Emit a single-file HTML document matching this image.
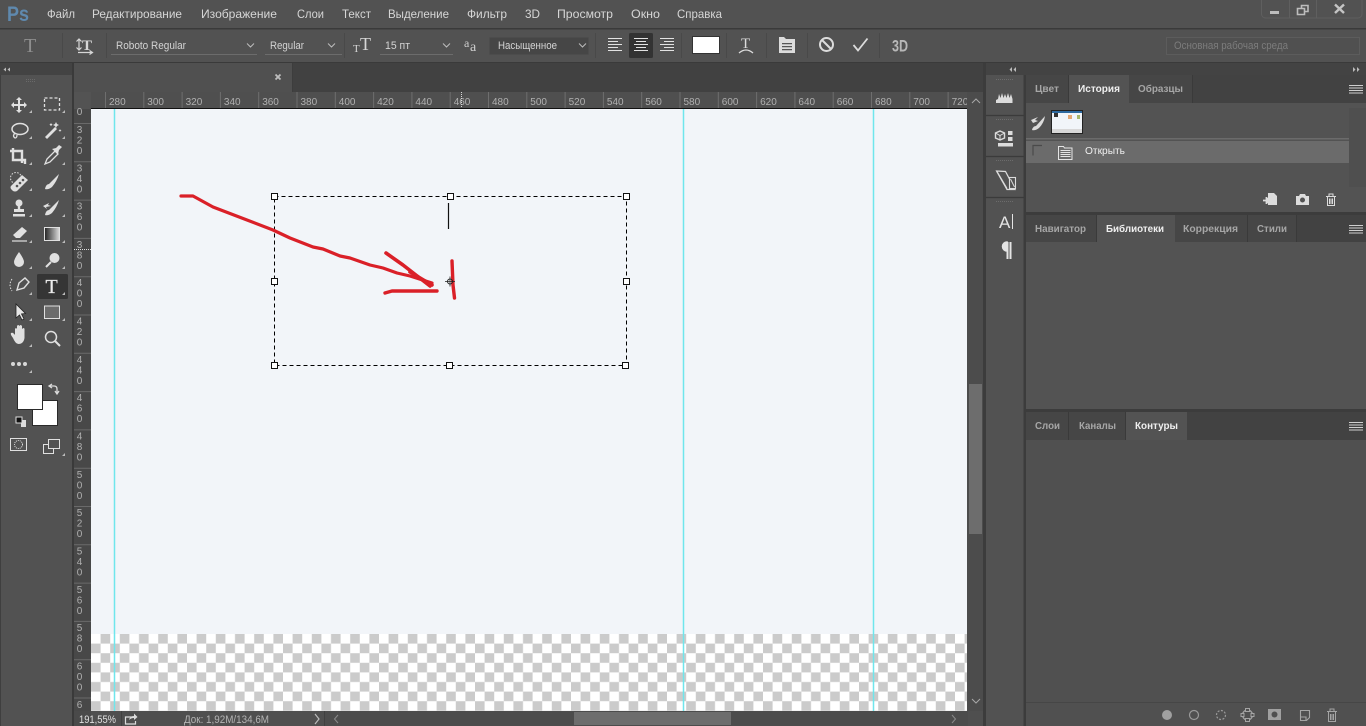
<!DOCTYPE html>
<html><head><meta charset="utf-8"><style>
html,body{margin:0;padding:0;background:#525252;overflow:hidden}
svg{display:block;font-family:"Liberation Sans",sans-serif;filter:blur(.25px)}
.m{font-size:12px;fill:#d6d6d6}
.o{font-size:11px;fill:#d4d4d4}
.r{font-size:10px;fill:#b0b0b0}
.t{font-size:10.5px;fill:#a6a6a6;font-weight:bold}
.a{font-size:10.5px;fill:#efefef;font-weight:bold}
</style></head><body>
<svg width="1366" height="726" viewBox="0 0 1366 726" xmlns="http://www.w3.org/2000/svg">
<defs>
<pattern id="ch" x="91" y="634" width="19.2" height="19.2" patternUnits="userSpaceOnUse">
<rect width="19.2" height="19.2" fill="#fff"/><rect x="9.6" width="9.6" height="9.6" fill="#cbcbcb"/><rect y="9.6" width="9.6" height="9.6" fill="#cbcbcb"/>
</pattern>
<linearGradient id="gr" x1="0" x2="1"><stop offset="0" stop-color="#222"/><stop offset="1" stop-color="#ddd"/></linearGradient>
</defs>
<rect width="1366" height="726" fill="#525252"/>
<!-- title bar -->
<rect y="28" width="1366" height="1.5" fill="#3a3a3a"/>
<text x="7" y="21" font-size="21" font-weight="bold" fill="#5f89ae" textLength="22" lengthAdjust="spacingAndGlyphs">Ps</text>
<g class="m">
<text x="47" y="18" textLength="28" lengthAdjust="spacingAndGlyphs">Файл</text>
<text x="92" y="18" textLength="90" lengthAdjust="spacingAndGlyphs">Редактирование</text>
<text x="201" y="18" textLength="76" lengthAdjust="spacingAndGlyphs">Изображение</text>
<text x="297" y="18" textLength="27" lengthAdjust="spacingAndGlyphs">Слои</text>
<text x="342" y="18" textLength="29" lengthAdjust="spacingAndGlyphs">Текст</text>
<text x="388" y="18" textLength="61" lengthAdjust="spacingAndGlyphs">Выделение</text>
<text x="467" y="18" textLength="40" lengthAdjust="spacingAndGlyphs">Фильтр</text>
<text x="525" y="18" textLength="15" lengthAdjust="spacingAndGlyphs">3D</text>
<text x="557" y="18" textLength="56" lengthAdjust="spacingAndGlyphs">Просмотр</text>
<text x="631" y="18" textLength="29" lengthAdjust="spacingAndGlyphs">Окно</text>
<text x="677" y="18" textLength="45" lengthAdjust="spacingAndGlyphs">Справка</text>
</g>
<!-- window controls -->
<path d="M1261.5 0V14a4 4 0 0 0 4 4H1358a4 4 0 0 0 4-4V0M1289.5 0V18M1316.5 0V18" fill="none" stroke="#5f5f5f"/>
<rect x="1270" y="11" width="9" height="3" fill="#bdbdbd"/>
<path d="M1297.5 8.5h7v6h-7zM1301.5 8V5.500h6.500v6h-3" fill="none" stroke="#bdbdbd" stroke-width="1.600"/>
<path d="M1335 4.500l9 8.500M1344 4.500l-9 8.500" stroke="#c4c4c4" stroke-width="2.400"/>
<!-- options bar -->
<path d="M62.500 33V58M106.500 33V58M344.500 33V58M595.500 33V58M681.500 33V58M726.500 33V58M766.500 33V58M807.500 33V58M879.500 33V58" stroke="#494949"/>
<text x="24" y="52" font-family="Liberation Serif" font-size="20" fill="#8e8e8e">T</text>
<g fill="none" stroke="#d6d6d6" stroke-width="1.200">
<path d="M79 39v11M76.500 47.500L79 50l2.500-2.500M76.500 41.500L79 39l2.500 2.500"/>
<path d="M78 52.500h14M89.500 50.500l3 2-3 2"/>
</g>
<text x="82" y="50" font-family="Liberation Serif" font-weight="bold" font-size="15" fill="#d6d6d6">T</text>
<g class="o">
<text x="116" y="49" textLength="70" lengthAdjust="spacingAndGlyphs">Roboto Regular</text>
<text x="270" y="49" textLength="34" lengthAdjust="spacingAndGlyphs">Regular</text>
<text x="385" y="49" textLength="25" lengthAdjust="spacingAndGlyphs">15 пт</text>
</g>
<path d="M111 54.500H257M265 54.500H342M380 54.500H453" stroke="#6c6c6c"/>
<path d="M247 43.500l3.500 3.500 3.500-3.500M328 43.500l3.500 3.500 3.500-3.500M443 43.500l3.500 3.500 3.500-3.500" fill="none" stroke="#bcbcbc"/>
<text x="353" y="52" font-family="Liberation Serif" font-size="11" fill="#d6d6d6">T</text>
<text x="360" y="50" font-family="Liberation Serif" font-size="18" fill="#d6d6d6">T</text>
<text x="464" y="47" font-family="Liberation Serif" font-size="12" fill="#cfcfcf">a</text>
<text x="470" y="51" font-family="Liberation Serif" font-size="14" fill="#cfcfcf">a</text>
<rect x="489.500" y="37.500" width="99" height="17" rx="1" fill="#464646" stroke="#4c4c4c"/>
<text x="498" y="49" class="o" textLength="59" lengthAdjust="spacingAndGlyphs">Насыщенное</text>
<path d="M579 43.500l3.500 3.500 3.500-3.500" fill="none" stroke="#bcbcbc"/>
<rect x="629" y="33" width="24" height="25" rx="1.500" fill="#333"/>
<path d="M608 38.500h14M608 41.500h10M608 44.500h14M608 47.500h10M608 50.500h14M634 38.500h14M636 41.500h10M634 44.500h14M636 47.500h10M634 50.500h14M660 38.500h14M664 41.500h10M660 44.500h14M664 47.500h10M660 50.500h14" stroke="#e2e2e2" stroke-width="1.100"/>
<rect x="692.500" y="36.500" width="27" height="17" fill="#fff" stroke="#333"/>
<text x="741" y="48" font-family="Liberation Serif" font-size="15" fill="#dcdcdc">T</text>
<path d="M739 53q7-6 14 0" fill="none" stroke="#dcdcdc" stroke-width="1.300"/>
<path d="M779 37h5l2 2h9v14h-16z" fill="#dcdcdc"/>
<path d="M782 43h10v1.200h-10zM782 46h10v1.200h-10zM782 49h10v1.200h-10z" fill="#555"/>
<circle cx="826.500" cy="44.500" r="6.500" fill="none" stroke="#dcdcdc" stroke-width="2"/>
<path d="M822 40l9 9" stroke="#dcdcdc" stroke-width="2"/>
<path d="M853.500 45l4.500 5.500 9.500-12" fill="none" stroke="#dcdcdc" stroke-width="1.800"/>
<text x="892" y="51.500" font-size="17" font-weight="bold" fill="#b8b8b8" textLength="16" lengthAdjust="spacingAndGlyphs">3D</text>
<!-- workspace -->
<rect x="1166.500" y="37.500" width="193" height="17" fill="#505050" stroke="#5c5c5c"/>
<text x="1174" y="49" font-size="11" fill="#7c7c7c" textLength="114" lengthAdjust="spacingAndGlyphs">Основная рабочая среда</text>
<!-- separators -->
<rect y="62" width="1366" height="1.500" fill="#3a3a3a"/>
<rect x="74" y="63" width="912" height="29" fill="#414141"/>
<rect x="74" y="63" width="218" height="29" fill="#505050"/>
<rect x="292" y="63" width="1" height="29" fill="#3d3d3d"/>
<path d="M275.500 74.500l5 5M280.500 74.500l-5 5" stroke="#bdbdbd" stroke-width="1.800"/>
<!-- left toolbar -->
<rect x="0" y="63" width="72" height="12" fill="#434343"/>
<rect x="72" y="63" width="2" height="663" fill="#3a3a3a"/>
<rect x="0" y="75" width="1" height="651" fill="#3f3f3f"/>
<path d="M6 67.500l-2.500 2 2.500 2zM10 67.500l-2.500 2 2.500 2z" fill="#bbb"/>
<path d="M26 79.500h10M26 81.500h10" stroke="#6a6a6a" stroke-dasharray="1 1"/>
<!-- tools -->
<g>
<path d="M19 98v14M12 105h14" stroke="#e0e0e0" stroke-width="2"/>
<path d="M19 97l-3 3h6zM19 113l-3-3h6zM11 105l3-3v6zM27 105l-3-3v6z" fill="#e0e0e0"/>
<rect x="44.500" y="98" width="15" height="12" fill="none" stroke="#e0e0e0" stroke-width="1.300" stroke-dasharray="3 2"/>
<ellipse cx="20" cy="129" rx="8" ry="5.500" fill="none" stroke="#e0e0e0" stroke-width="1.500"/>
<path d="M15 133q-3 3 0 5q2 0 2-3" fill="none" stroke="#e0e0e0" stroke-width="1.300"/>
<path d="M45 137l10-10 2 2-10 10z" fill="#e0e0e0"/>
<path d="M56 122l1 2 2 1-2 1-1 2-1-2-2-1 2-1zM51 123l.6 1 1 .6-1 .6-.6 1-.6-1-1-.6 1-.6zM60 129l.5 1 1 .5-1 .5-.5 1-.5-1-1-.5 1-.5z" fill="#e0e0e0"/>
<path d="M13 148V160H25V164M10 151H22V163" fill="none" stroke="#e0e0e0" stroke-width="2.400"/>
<path d="M45 164l2-5 8-8 3 3-8 8z" fill="none" stroke="#e0e0e0" stroke-width="1.300"/>
<path d="M52 149l4-1 3-3 3 2-3 3-1 4z" fill="#e0e0e0"/>
<path d="M11 186l11-11 6 5-11 11q-2 1-4 0l-2-2q-1-2 0-3z" fill="#e0e0e0"/>
<circle cx="16" cy="178" r="5.500" fill="none" stroke="#e0e0e0" stroke-dasharray="1.500 1.500"/>
<circle cx="20" cy="183" r="1.300" fill="#555"/><circle cx="17" cy="186" r="1.300" fill="#555"/><circle cx="23" cy="180" r="1.300" fill="#555"/>
<path d="M45 189q1-5 4-5l10-10q-2 7-7 13-4 3-7 2z" fill="#e0e0e0"/>
<path d="M13 214h12v2.500H13zM14 209h10v3H14z" fill="#e0e0e0"/>
<circle cx="19" cy="203" r="3.500" fill="#e0e0e0"/>
<rect x="17.800" y="205" width="2.400" height="5" fill="#e0e0e0"/>
<path d="M45 215q1-5 4-5l10-10q-2 7-7 13-4 3-7 2z" fill="#e0e0e0"/>
<path d="M43 206l6-3-1 2 3 1-5 1 1 2z" fill="#e0e0e0"/>
<path d="M13 235l9-8 5 4-7 7h-4z" fill="#e0e0e0"/>
<path d="M12 241h15" stroke="#e0e0e0" stroke-width="1.200"/>
<rect x="44.500" y="227.500" width="15" height="13" fill="url(#gr)" stroke="#e0e0e0"/>
<path d="M19 252q-5 7-5 10a5 5 0 0 0 10 0q0-3-5-10z" fill="#e0e0e0"/>
<circle cx="54.500" cy="258" r="5" fill="#e0e0e0"/>
<path d="M51 262l-5 5" stroke="#e0e0e0" stroke-width="2"/>
<path d="M17 290l2-7 6-5 4 4-5 6z" fill="none" stroke="#e0e0e0" stroke-width="1.400"/>
<path d="M12 279q-4 6 0 12" fill="none" stroke="#e0e0e0" stroke-dasharray="1.500 1.500"/>
<rect x="37" y="274" width="31" height="25" rx="1.500" fill="#353535"/>
<text x="45.500" y="293" font-family="Liberation Serif" font-size="20" fill="#ececec" stroke="#ececec" stroke-width=".3">T</text>
<path d="M16 304v14l3.500-3 2.500 5 2-1-2.500-5 4-.5z" fill="#e6e6e6" stroke="#222" stroke-width=".8"/>
<rect x="44.500" y="306" width="15" height="12.500" fill="#6c6c6c" stroke="#e0e0e0"/>
<path d="M13 338q-3-4-2-5 2-1 4 2v-6q1-2 2 0v-3q1-2 2.500 0 1-2 2.500 0v3q2-2 2.500 0v9q-1 6-6 6-3 0-5.500-6z" fill="#e0e0e0"/>
<circle cx="51" cy="337" r="5.500" fill="none" stroke="#e0e0e0" stroke-width="1.500"/>
<path d="M55 341l5 5" stroke="#e0e0e0" stroke-width="2"/>
<circle cx="13" cy="364" r="2" fill="#d8d8d8"/><circle cx="19" cy="364" r="2" fill="#d8d8d8"/><circle cx="25" cy="364" r="2" fill="#d8d8d8"/>
<path d="M32 113v-3l-3 3zM65 113v-3l-3 3zM32 139v-3l-3 3zM65 139v-3l-3 3zM32 165v-3l-3 3zM65 165v-3l-3 3zM32 191v-3l-3 3zM65 191v-3l-3 3zM32 217v-3l-3 3zM65 217v-3l-3 3zM32 243v-3l-3 3zM65 243v-3l-3 3zM32 269v-3l-3 3zM65 269v-3l-3 3zM32 295v-3l-3 3zM65 295v-3l-3 3zM32 321v-3l-3 3zM65 321v-3l-3 3zM32 347v-3l-3 3zM32 373v-3l-3 3zM65 456v-3l-3 3z" fill="#bbb"/>
<!-- colors -->
<rect x="32.500" y="400.500" width="25" height="25" fill="#fff" stroke="#2a2a2a"/>
<rect x="17.500" y="384.500" width="25" height="25" fill="#fff" stroke="#2a2a2a"/>
<rect x="21" y="420" width="5" height="7" fill="#ddd"/>
<rect x="16" y="417" width="6" height="6" fill="#111" stroke="#ddd"/>
<path d="M49 386h5q3 0 3 3v5M52 384l-3 2 3 2M55 391l2 3 2-3" fill="none" stroke="#dcdcdc" stroke-width="1.300"/>
<rect x="10.500" y="438.500" width="16" height="12" fill="none" stroke="#e0e0e0"/>
<circle cx="18.500" cy="444.500" r="4" fill="none" stroke="#e0e0e0" stroke-dasharray="1 1"/>
<rect x="43.500" y="444.500" width="10" height="9" fill="#525252" stroke="#e0e0e0"/>
<rect x="48.500" y="439.500" width="11" height="9" fill="#525252" stroke="#e0e0e0"/>
</g>
<!-- ruler -->
<rect x="74" y="92" width="910" height="17" fill="#4f4f4f"/>
<rect x="74" y="92" width="17" height="634" fill="#484848"/>
<rect x="74" y="92" width="17" height="17" fill="#535353"/>
<path d="M105.500 92V108M143.800 92V108M182.100 92V108M220.400 92V108M258.700 92V108M297 92V108M335.300 92V108M373.600 92V108M411.900 92V108M450.200 92V108M488.500 92V108M526.800 92V108M565.100 92V108M603.400 92V108M641.700 92V108M680 92V108M718.300 92V108M756.600 92V108M794.900 92V108M833.200 92V108M871.500 92V108M909.800 92V108M948.100 92V108" stroke="#6e6e6e"/>
<g class="r">
<text x="109" y="105">280</text><text x="147.300" y="105">300</text><text x="185.600" y="105">320</text><text x="223.900" y="105">340</text><text x="262.200" y="105">360</text><text x="300.500" y="105">380</text><text x="338.800" y="105">400</text><text x="377.100" y="105">420</text><text x="415.400" y="105">440</text><text x="453.700" y="105">460</text><text x="492" y="105">480</text><text x="530.300" y="105">500</text><text x="568.600" y="105">520</text><text x="606.900" y="105">540</text><text x="645.200" y="105">560</text><text x="683.500" y="105">580</text><text x="721.800" y="105">600</text><text x="760.100" y="105">620</text><text x="798.400" y="105">640</text><text x="836.700" y="105">660</text><text x="875" y="105">680</text><text x="913.300" y="105">700</text><text x="951.600" y="105">720</text>
</g>
<path d="M461.500 92V108" stroke="#d8d8d8" stroke-dasharray="1 1"/>
<path d="M74 123.500H91M74 161.800H91M74 200.100H91M74 238.400H91M74 276.700H91M74 315H91M74 353.300H91M74 391.600H91M74 429.900H91M74 468.200H91M74 506.500H91M74 544.800H91M74 583.100H91M74 621.400H91M74 659.700H91M74 698H91" stroke="#6a6a6a"/>
<path d="M74 249.500H91" stroke="#e0e0e0" stroke-dasharray="1 1"/>
<g class="r" text-anchor="middle">
<text x="79.500" y="115">0</text>
<text x="79.500" y="133">3</text><text x="79.500" y="143.500">2</text><text x="79.500" y="154">0</text>
<text x="79.500" y="171.500">3</text><text x="79.500" y="182">4</text><text x="79.500" y="192.500">0</text>
<text x="79.500" y="209.500">3</text><text x="79.500" y="220">6</text><text x="79.500" y="230.500">0</text>
<text x="79.500" y="248">3</text><text x="79.500" y="258.500">8</text><text x="79.500" y="269">0</text>
<text x="79.500" y="286">4</text><text x="79.500" y="296.500">0</text><text x="79.500" y="307">0</text>
<text x="79.500" y="324.500">4</text><text x="79.500" y="335">2</text><text x="79.500" y="345.500">0</text>
<text x="79.500" y="363">4</text><text x="79.500" y="373.500">4</text><text x="79.500" y="384">0</text>
<text x="79.500" y="401">4</text><text x="79.500" y="411.500">6</text><text x="79.500" y="422">0</text>
<text x="79.500" y="439.500">4</text><text x="79.500" y="450">8</text><text x="79.500" y="460.500">0</text>
<text x="79.500" y="478">5</text><text x="79.500" y="488.500">0</text><text x="79.500" y="499">0</text>
<text x="79.500" y="516">5</text><text x="79.500" y="526.500">2</text><text x="79.500" y="537">0</text>
<text x="79.500" y="554.500">5</text><text x="79.500" y="565">4</text><text x="79.500" y="575.500">0</text>
<text x="79.500" y="593">5</text><text x="79.500" y="603.500">6</text><text x="79.500" y="614">0</text>
<text x="79.500" y="631">5</text><text x="79.500" y="641.500">8</text><text x="79.500" y="652">0</text>
<text x="79.500" y="669.500">6</text><text x="79.500" y="680">0</text><text x="79.500" y="690.500">0</text>
<text x="79.500" y="708">6</text>
</g>
<!-- canvas -->
<rect x="91" y="108" width="876" height="1.500" fill="#111"/>
<rect x="91" y="109" width="876" height="526" fill="#f2f5f9"/>
<rect x="91" y="634" width="876" height="77" fill="url(#ch)"/>
<path d="M114.500 109V711M683.500 109V711M873.500 109V711" stroke="#6fe6ec" stroke-width="1.500"/>
<!-- selection -->
<rect x="274.500" y="196.500" width="352" height="169" fill="none" stroke="#000" stroke-dasharray="4 3"/>
<g fill="#fff" stroke="#111">
<rect x="271.500" y="193.500" width="6" height="6"/><rect x="447.500" y="193.500" width="6" height="6"/><rect x="623.500" y="193.500" width="6" height="6"/>
<rect x="271.500" y="278.500" width="6" height="6"/><rect x="623.500" y="278.500" width="6" height="6"/>
<rect x="271.500" y="362.500" width="6" height="6"/><rect x="446.500" y="362.500" width="6" height="6"/><rect x="622.500" y="362.500" width="6" height="6"/>
</g>
<path d="M448.500 203V229" stroke="#111" stroke-width="1.200"/>
<!-- red -->
<g fill="none" stroke="#da2028" stroke-width="3.200" stroke-linecap="round" stroke-linejoin="round">
<path d="M181 196H193L213 207L247 220L273 230L290 238L313 247L323 249L340 256L350 258L370 265L383 268L397 273L410 276L432 283"/>
<path d="M386 253L403 265L430 286" stroke-width="3.600"/>
<path d="M410 272L432 285" stroke-width="3.600"/>
<path d="M385 293L392 291H437" stroke-width="3.400"/>
<path d="M452 261L453 285L454.500 298" stroke-width="3.400"/>
</g>
<circle cx="450" cy="281.500" r="2.500" fill="none" stroke="#222"/>
<path d="M445 281.500h10M450 276.500v10" stroke="#222" stroke-width=".8"/>
<!-- scrollbars -->
<rect x="967" y="92" width="16" height="634" fill="#4c4c4c"/>
<rect x="969" y="384" width="13" height="150" fill="#6d6d6d"/>
<path d="M972 103l4-4 4 4M972 699l4 4 4-4" fill="none" stroke="#a8a8a8"/>
<rect x="74" y="711" width="910" height="15" fill="#4f4f4f"/>
<rect x="74" y="711" width="17" height="15" fill="#4a4a4a"/>
<rect x="324" y="711" width="644" height="15" fill="#4c4c4c"/>
<rect x="574" y="712" width="157" height="13" fill="#6d6d6d"/>
<path d="M121.500 711V726M324.500 711V726" stroke="#404040"/>
<text x="79" y="723" font-size="11" fill="#e0e0e0" textLength="37" lengthAdjust="spacingAndGlyphs">191,55%</text>
<path d="M134 717h-8.500v7h10v-3" fill="none" stroke="#dcdcdc" stroke-width="1.200"/>
<path d="M129 720q1-4 5-4v-2.500l3.500 3.500-3.500 3v-2q-3 0-5 2z" fill="#dcdcdc"/>
<text x="184" y="723" font-size="11" fill="#b4b4b4" textLength="85" lengthAdjust="spacingAndGlyphs">Док: 1,92M/134,6M</text>
<path d="M315 714l4 5-4 5" fill="none" stroke="#bbb" stroke-width="1.200"/>
<path d="M338 715l-3.500 4 3.500 4M952 715l3.500 4-3.500 4" fill="none" stroke="#8a8a8a"/>
<!-- dock divider -->
<rect x="983" y="63" width="3" height="663" fill="#3c3c3c"/>
<rect x="1023.500" y="63" width="2.500" height="663" fill="#3c3c3c"/>
<rect x="986" y="63" width="380" height="12" fill="#434343"/>
<path d="M1012 67l-2.500 2.500 2.500 2.500zM1016 67l-2.500 2.500 2.500 2.500zM1353 67l2.500 2.500-2.500 2.500zM1357 67l2.500 2.500-2.500 2.500z" fill="#bbb"/>
<path d="M986 115.500h38M986 156.500h38M986 197.500h38" stroke="#3b3b3b" stroke-width="1.200"/>
<path d="M996 79.500h18M996 119.500h18M996 160.500h18M996 201.500h18" stroke="#6c6c6c" stroke-dasharray="1 1"/>
<!-- dock icons -->
<path d="M996 103v-3l2-1 1-5 1.500 4 1.500-5 1.500 5 1.500-4 1.500 4 1.500-5 1.500 5 1.500-4 1.500 5v4z" fill="#dcdcdc"/>
<path d="M1000 131l4.500 2v5l-4.500 2-4.500-2v-5z" fill="none" stroke="#dcdcdc" stroke-width="1.400"/>
<path d="M1000 135.500v4.500M995.500 133l4.500 2.500 4.500-2.500" fill="none" stroke="#dcdcdc"/>
<rect x="1008" y="131" width="4.500" height="4" fill="#dcdcdc"/><rect x="1008" y="137" width="4.500" height="4" fill="#dcdcdc"/>
<rect x="998" y="143" width="15" height="3.500" fill="#dcdcdc"/>
<path d="M996.500 171l9 .5 9.500 18h-8z" fill="none" stroke="#dcdcdc" stroke-width="1.200"/>
<path d="M997 171.500l10 17" fill="none" stroke="#dcdcdc" stroke-width="1.200"/>
<rect x="1009.500" y="177.500" width="6" height="11" fill="#525252" stroke="#dcdcdc" stroke-width="1.100"/>
<path d="M1010.500 179l4 8" stroke="#dcdcdc"/>
<text x="999" y="228" font-size="17" fill="#e4e4e4">A</text>
<path d="M1012.500 214V229" stroke="#e4e4e4"/>
<path d="M1007.500 242v17M1010.500 242v17" stroke="#e4e4e4" stroke-width="2"/>
<path d="M1007 242a4 4 0 0 0 0 9z" fill="#e4e4e4" stroke="#e4e4e4" stroke-width="1.500"/>
<!-- history panel -->
<rect x="1026" y="75" width="340" height="28" fill="#424242"/>
<rect x="1026" y="75" width="43" height="28" fill="#464646"/>
<rect x="1129" y="75" width="63" height="28" fill="#464646"/>
<rect x="1069" y="75" width="60" height="28" fill="#535353"/>
<path d="M1068.500 75V103M1192.500 75V103" stroke="#3a3a3a"/>
<text x="1035" y="92" class="t" textLength="24" lengthAdjust="spacingAndGlyphs">Цвет</text>
<text x="1078" y="92" class="a" textLength="42" lengthAdjust="spacingAndGlyphs">История</text>
<text x="1138" y="92" class="t" textLength="45" lengthAdjust="spacingAndGlyphs">Образцы</text>
<path d="M1349 85.500h14M1349 88h14M1349 90.500h14M1349 93h14" stroke="#cfcfcf"/>
<rect x="1026" y="103" width="340" height="84" fill="#535353"/>
<rect x="1349" y="108" width="17" height="79" fill="#4f4f4f"/>
<path d="M1031 120l7-3-3 3 3 1-5 2zM1032 130q1-4 4-4l9-10q-1 7-6 12-4 3-7 2z" fill="#dcdcdc"/>
<rect x="1051.500" y="110.500" width="31" height="23" fill="#f1f5f9" stroke="#222"/>
<rect x="1052" y="111" width="30" height="2" fill="#2d6aa0"/>
<rect x="1052" y="129" width="30" height="4" fill="#d8d8d8"/>
<rect x="1054" y="113" width="4" height="4" fill="#333"/>
<rect x="1068" y="115" width="4" height="4" fill="#e4a873"/><rect x="1077" y="115" width="3" height="4" fill="#a8b86a"/>
<rect x="1026" y="138" width="323" height="1.500" fill="#6b6b6b"/>
<rect x="1026" y="141" width="323" height="22" fill="#6b6b6b"/>
<path d="M1042 145.500h-9v10" fill="none" stroke="#4a4a4a" stroke-width="1.200"/>
<path d="M1058.500 159.500V146.500h5l1 1.500h7.500v11.500z" fill="#6b6b6b" stroke="#e4e4e4"/>
<path d="M1060.500 150.500h10M1060.500 152.500h10M1060.500 154.500h10M1060.500 156.500h10" stroke="#e4e4e4"/>
<text x="1085" y="154" font-size="10.500" fill="#efefef" textLength="40" lengthAdjust="spacingAndGlyphs">Открыть</text>
<rect x="1026" y="187" width="340" height="25" fill="#535353"/>
<path d="M1268 193h6l3 3v9h-9v-2h-2v-5h2z" fill="#dcdcdc"/>
<path d="M1263 200.500h7M1266.500 197v7" stroke="#dcdcdc" stroke-width="1.800"/>
<path d="M1296 196h3l1-2h5l1 2h3v9h-13z" fill="#dcdcdc"/><circle cx="1302.500" cy="200" r="2.500" fill="#535353"/>
<path d="M1326 196.500h10M1329 196v-2h4v2M1327.500 197v8.500h7V197M1329.500 198.500v5.500M1331 198.500v5.500M1332.500 198.500v5.500" fill="none" stroke="#dcdcdc"/>
<rect x="1026" y="212" width="340" height="3" fill="#3c3c3c"/>
<!-- libraries -->
<rect x="1026" y="215" width="340" height="27" fill="#424242"/>
<rect x="1026" y="215" width="71" height="27" fill="#464646"/>
<rect x="1175" y="215" width="121" height="27" fill="#464646"/>
<rect x="1097" y="215" width="78" height="27" fill="#535353"/>
<path d="M1096.500 215V242M1247.500 215V242M1296.500 215V242" stroke="#3a3a3a"/>
<text x="1035" y="232" class="t" textLength="51" lengthAdjust="spacingAndGlyphs">Навигатор</text>
<text x="1106" y="232" class="a" textLength="58" lengthAdjust="spacingAndGlyphs">Библиотеки</text>
<text x="1183" y="232" class="t" textLength="55" lengthAdjust="spacingAndGlyphs">Коррекция</text>
<text x="1257" y="232" class="t" textLength="30" lengthAdjust="spacingAndGlyphs">Стили</text>
<path d="M1349 225.500h14M1349 228h14M1349 230.500h14M1349 233h14" stroke="#cfcfcf"/>
<rect x="1026" y="242" width="340" height="167" fill="#535353"/>
<rect x="1026" y="409" width="340" height="3" fill="#3c3c3c"/>
<!-- layers -->
<rect x="1026" y="412" width="340" height="28" fill="#424242"/>
<rect x="1026" y="412" width="100" height="28" fill="#464646"/>
<rect x="1126" y="412" width="61" height="28" fill="#535353"/>
<path d="M1068.500 412V440M1125.500 412V440" stroke="#3a3a3a"/>
<text x="1035" y="429" class="t" textLength="25" lengthAdjust="spacingAndGlyphs">Слои</text>
<text x="1079" y="429" class="t" textLength="37" lengthAdjust="spacingAndGlyphs">Каналы</text>
<text x="1135" y="429" class="a" textLength="43" lengthAdjust="spacingAndGlyphs">Контуры</text>
<path d="M1349 422.500h14M1349 425h14M1349 427.500h14M1349 430h14" stroke="#cfcfcf"/>
<rect x="1026" y="440" width="340" height="286" fill="#505050"/>
<rect x="1026" y="702" width="340" height="1" fill="#464646"/>
<circle cx="1167" cy="715" r="5" fill="#a0a0a0"/>
<circle cx="1194" cy="715" r="4.500" fill="none" stroke="#9a9a9a" stroke-width="1.200"/>
<circle cx="1221" cy="715" r="4.500" fill="none" stroke="#9a9a9a" stroke-width="1.200" stroke-dasharray="2 1.500"/>
<circle cx="1247.500" cy="715" r="5" fill="none" stroke="#a4a4a4" stroke-width="1.200"/>
<path d="M1245.500 708.500h4v3h-4zM1245.500 718.500h4v3h-4zM1241 713.500h3v3h-3zM1251 713.500h3v3h-3z" fill="#505050" stroke="#a4a4a4"/>
<rect x="1268" y="709" width="13" height="11" fill="#a0a0a0"/><circle cx="1274.500" cy="714.500" r="3" fill="#505050"/>
<path d="M1300.500 710.500h9v7l-3 3h-6zM1300 717h6v3" fill="none" stroke="#a4a4a4" stroke-width="1.100"/>
<path d="M1327 711.500h10M1330 711v-2h4v2M1328.500 712v9.500h7V712M1330.500 714v6M1332 714v6M1333.500 714v6" fill="none" stroke="#a4a4a4"/>
</svg>
</body></html>
